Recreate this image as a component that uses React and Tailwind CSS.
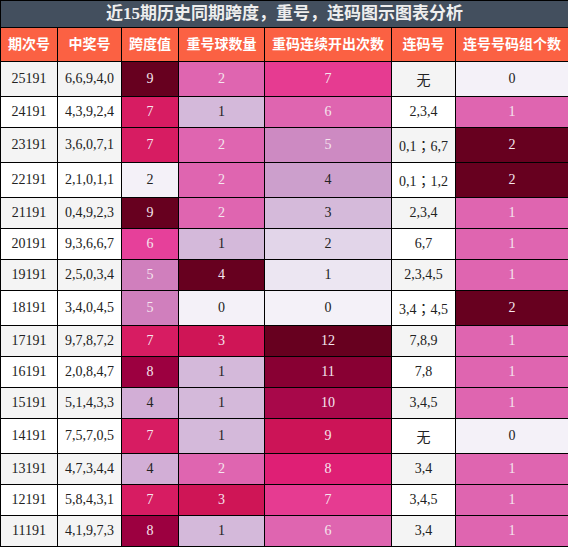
import React from 'react';

const rows = [
  ['25191', '6,6,9,4,0', 9, 2, 7, '无', 0],
  ['24191', '4,3,9,2,4', 7, 1, 6, '2,3,4', 1],
  ['23191', '3,6,0,7,1', 7, 2, 5, '0,1；6,7', 2],
  ['22191', '2,1,0,1,1', 2, 2, 4, '0,1；1,2', 2],
  ['21191', '0,4,9,2,3', 9, 2, 3, '2,3,4', 1],
  ['20191', '9,3,6,6,7', 6, 1, 2, '6,7', 1],
  ['19191', '2,5,0,3,4', 5, 4, 1, '2,3,4,5', 1],
  ['18191', '3,4,0,4,5', 5, 0, 0, '3,4；4,5', 2],
  ['17191', '9,7,8,7,2', 7, 3, 12, '7,8,9', 1],
  ['16191', '2,0,8,4,7', 8, 1, 11, '7,8', 1],
  ['15191', '5,1,4,3,3', 4, 1, 10, '3,4,5', 1],
  ['14191', '7,5,7,0,5', 7, 1, 9, '无', 0],
  ['13191', '4,7,3,4,4', 4, 2, 8, '3,4', 1],
  ['12191', '5,8,4,3,1', 7, 3, 7, '3,4,5', 1],
  ['11191', '4,1,9,7,3', 8, 1, 6, '3,4', 1],
];

// heat colours per column (PuRd-like scale)
const spanColors = {
  2: 'bg-[#f4f1f8] text-[#222]',
  4: 'bg-[#d2aed6] text-[#222]',
  5: 'bg-[#d07fbd] text-[#f5e6ee]',
  6: 'bg-[#e6409a] text-[#f5e6ee]',
  7: 'bg-[#d71c62] text-[#f5e6ee]',
  8: 'bg-[#9c0040] text-[#f5e6ee]',
  9: 'bg-[#67001f] text-[#f5e6ee]',
};

const repeatColors = {
  0: 'bg-[#f4f1f8] text-[#222]',
  1: 'bg-[#d4b9da] text-[#222]',
  2: 'bg-[#df65b0] text-[#f5e6ee]',
  3: 'bg-[#cf1556] text-[#f5e6ee]',
  4: 'bg-[#67001f] text-[#f5e6ee]',
};

const streakColors = {
  0: 'bg-[#f4f1f8] text-[#222]',
  1: 'bg-[#ece6f2] text-[#222]',
  2: 'bg-[#e2d5e9] text-[#222]',
  3: 'bg-[#d5bada] text-[#222]',
  4: 'bg-[#cc9fcc] text-[#222]',
  5: 'bg-[#cd8ac2] text-[#f5e6ee]',
  6: 'bg-[#df65b0] text-[#f5e6ee]',
  7: 'bg-[#e63b91] text-[#f5e6ee]',
  8: 'bg-[#df1f75] text-[#f5e6ee]',
  9: 'bg-[#cc1457] text-[#f5e6ee]',
  10: 'bg-[#a8084a] text-[#f5e6ee]',
  11: 'bg-[#880033] text-[#f5e6ee]',
  12: 'bg-[#67001f] text-[#f5e6ee]',
};

const groupColors = {
  0: 'bg-[#f4f1f8] text-[#222]',
  1: 'bg-[#df65b0] text-[#f5e6ee]',
  2: 'bg-[#67001f] text-[#f5e6ee]',
};

const headers = ['期次号', '中奖号', '跨度值', '重号球数量', '重码连续开出次数', '连码号', '连号号码组个数'];

const App = () => {
  return (
    <div className="w-[568px] h-[548px] bg-white overflow-hidden">
      <table
        className="w-[568px] table-fixed text-[14px] text-center"
        style={{ fontFamily: '"Liberation Serif", "Noto Sans CJK SC", serif' }}
      >
        <colgroup>
          <col className="w-[57px]" />
          <col className="w-[64px]" />
          <col className="w-[57px]" />
          <col className="w-[86px]" />
          <col className="w-[127px]" />
          <col className="w-[64px]" />
          <col className="w-[113px]" />
        </colgroup>
        <thead>
          <tr>
            <th colSpan={7} className="border border-black bg-[#434f5e] text-[#eeeeee] text-[17px] font-bold p-0">
              近15期历史同期跨度，重号，连码图示图表分析
            </th>
          </tr>
          <tr>
            {headers.map(h => (
              <th key={h} className="border border-black bg-[#fb6143] text-white font-bold py-1.5 px-0 whitespace-nowrap">
                {h}
              </th>
            ))}
          </tr>
        </thead>
        <tbody className="leading-[normal]">
          {rows.map((r, i) => {
            const plain = i % 2 === 0 ? 'bg-[#f4f4f4] text-[#222]' : 'bg-white text-[#222]';
            return (
              <tr key={r[0]}>
                <td className={`border border-black py-[7px] px-0 ${plain}`}>{r[0]}</td>
                <td className={`border border-black py-[7px] px-0 ${plain}`}>{r[1]}</td>
                <td className={`border border-black py-[7px] px-0 ${spanColors[r[2]]}`}>{r[2]}</td>
                <td className={`border border-black py-[7px] px-0 ${repeatColors[r[3]]}`}>{r[3]}</td>
                <td className={`border border-black py-[7px] px-0 ${streakColors[r[4]]}`}>{r[4]}</td>
                <td
                  className={`border border-black py-[7px] px-0 whitespace-nowrap ${plain}`}
                  style={{ fontFamily: '"Liberation Serif", "Noto Sans CJK TC", serif' }}
                >
                  {r[5]}
                </td>
                <td className={`border border-black py-[7px] px-0 ${groupColors[r[6]]}`}>{r[6]}</td>
              </tr>
            );
          })}
        </tbody>
      </table>
    </div>
  );
};

export default App;
